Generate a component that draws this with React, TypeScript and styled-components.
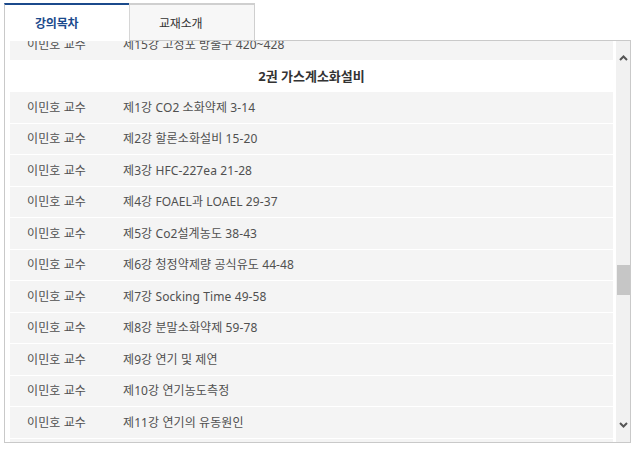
import React, { useLayoutEffect, useRef } from "react";
import styled, { createGlobalStyle } from "styled-components";

const GlobalStyle = createGlobalStyle`
  html, body { margin: 0; padding: 0; background: #fff; }
  body { font-family: "Noto Sans", "Noto Sans CJK KR", sans-serif; }
  * { box-sizing: border-box; }
`;

const Wrap = styled.div`
  width: 627px;
  margin: 3px 0 0 4px;
`;

const TabBar = styled.div`
  display: flex;
  height: 38px;
`;

const Tab = styled.div<{ $active?: boolean }>`
  display: flex;
  align-items: center;
  padding-left: ${(p) => (p.$active ? "30px" : "29px")};
  font-size: 12px;
  letter-spacing: -0.2px;
  ${(p) =>
    p.$active
      ? `
    width: 125px;
    border-top: 2px solid #1b4a8c;
    border-left: 1px solid #c9c9c9;
    background: #fff;
    color: #1b4a8c;
    font-weight: 700;
  `
      : `
    width: 126px;
    border-top: 2px solid #cfcfcf;
    border-left: 1px solid #d6d6d6;
    border-right: 1px solid #cfcfcf;
    border-bottom: 1px solid #c9c9c9;
    background: #f7f7f7;
    color: #333;
  `}
`;

const TabFill = styled.div`
  flex: 1;
  border-bottom: 1px solid #c9c9c9;
`;

const Panel = styled.div`
  display: flex;
  height: 402px;
  padding-left: 5px;
  border: 1px solid #c9c9c9;
  border-top: none;
`;

const List = styled.div`
  width: 603px;
  height: 401px;
  overflow: hidden;
`;

const Row = styled.div`
  display: flex;
  align-items: center;
  height: 31.5px;
  padding: 1px 0 0 17px;
  background: #f4f4f4;
  border-bottom: 1px solid #fff;
  font-size: 12px;
  line-height: 16px;
  letter-spacing: 0.1px;
  color: #505050;
  white-space: nowrap;
`;

const Teacher = styled.span`
  width: 96px;
  flex-shrink: 0;
`;

const Title = styled.span``;

const BookHeading = styled.div`
  display: flex;
  align-items: center;
  justify-content: center;
  height: 31.5px;
  background: #fff;
  font-size: 13px;
  line-height: 17px;
  font-weight: 700;
  color: #333;
`;

const ScrollBar = styled.div`
  display: flex;
  flex-direction: column;
  width: 14px;
  height: 401px;
  margin-left: 3px;
  background: #f1f1f1;
`;

const ArrowButton = styled.div`
  height: 34px;
  display: flex;
  align-items: center;
  justify-content: center;
  color: #555;
`;

const Track = styled.div`
  flex: 1;
  position: relative;
`;

const Thumb = styled.div<{ $top: number }>`
  position: absolute;
  left: 1px;
  right: 0;
  top: ${(p) => p.$top}px;
  height: 30px;
  background: #c6c6c6;
`;

const Chevron = ({ up }: { up?: boolean }) => (
  <svg width="9" height="6" viewBox="0 0 9 6">
    <path
      d={up ? "M1 5 L4.5 1.5 L8 5" : "M1 1 L4.5 4.5 L8 1"}
      fill="none"
      stroke="currentColor"
      strokeWidth="2"
    />
  </svg>
);

const lectures = [
  "제1강 CO2 소화약제 3-14",
  "제2강 할론소화설비 15-20",
  "제3강 HFC-227ea 21-28",
  "제4강 FOAEL과 LOAEL 29-37",
  "제5강 Co2설계농도 38-43",
  "제6강 청정약제량 공식유도 44-48",
  "제7강 Socking Time 49-58",
  "제8강 분말소화약제 59-78",
  "제9강 연기 및 제연",
  "제10강 연기농도측정",
  "제11강 연기의 유동원인",
  "제12강 제연방식",
];

export default function App() {
  const listRef = useRef<HTMLDivElement>(null);
  useLayoutEffect(() => {
    if (listRef.current) listRef.current.scrollTop = 12;
  }, []);

  return (
    <>
      <GlobalStyle />
      <Wrap>
        <TabBar>
          <Tab $active>강의목차</Tab>
          <Tab>교재소개</Tab>
          <TabFill />
        </TabBar>
        <Panel>
          <List ref={listRef}>
            <Row>
              <Teacher>이민호 교수</Teacher>
              <Title>제15강 고정포 방출구 420~428</Title>
            </Row>
            <BookHeading>2권 가스계소화설비</BookHeading>
            {lectures.map((t) => (
              <Row key={t}>
                <Teacher>이민호 교수</Teacher>
                <Title>{t}</Title>
              </Row>
            ))}
          </List>
          <ScrollBar>
            <ArrowButton>
              <Chevron up />
            </ArrowButton>
            <Track>
              <Thumb $top={190} />
            </Track>
            <ArrowButton>
              <Chevron />
            </ArrowButton>
          </ScrollBar>
        </Panel>
      </Wrap>
    </>
  );
}
